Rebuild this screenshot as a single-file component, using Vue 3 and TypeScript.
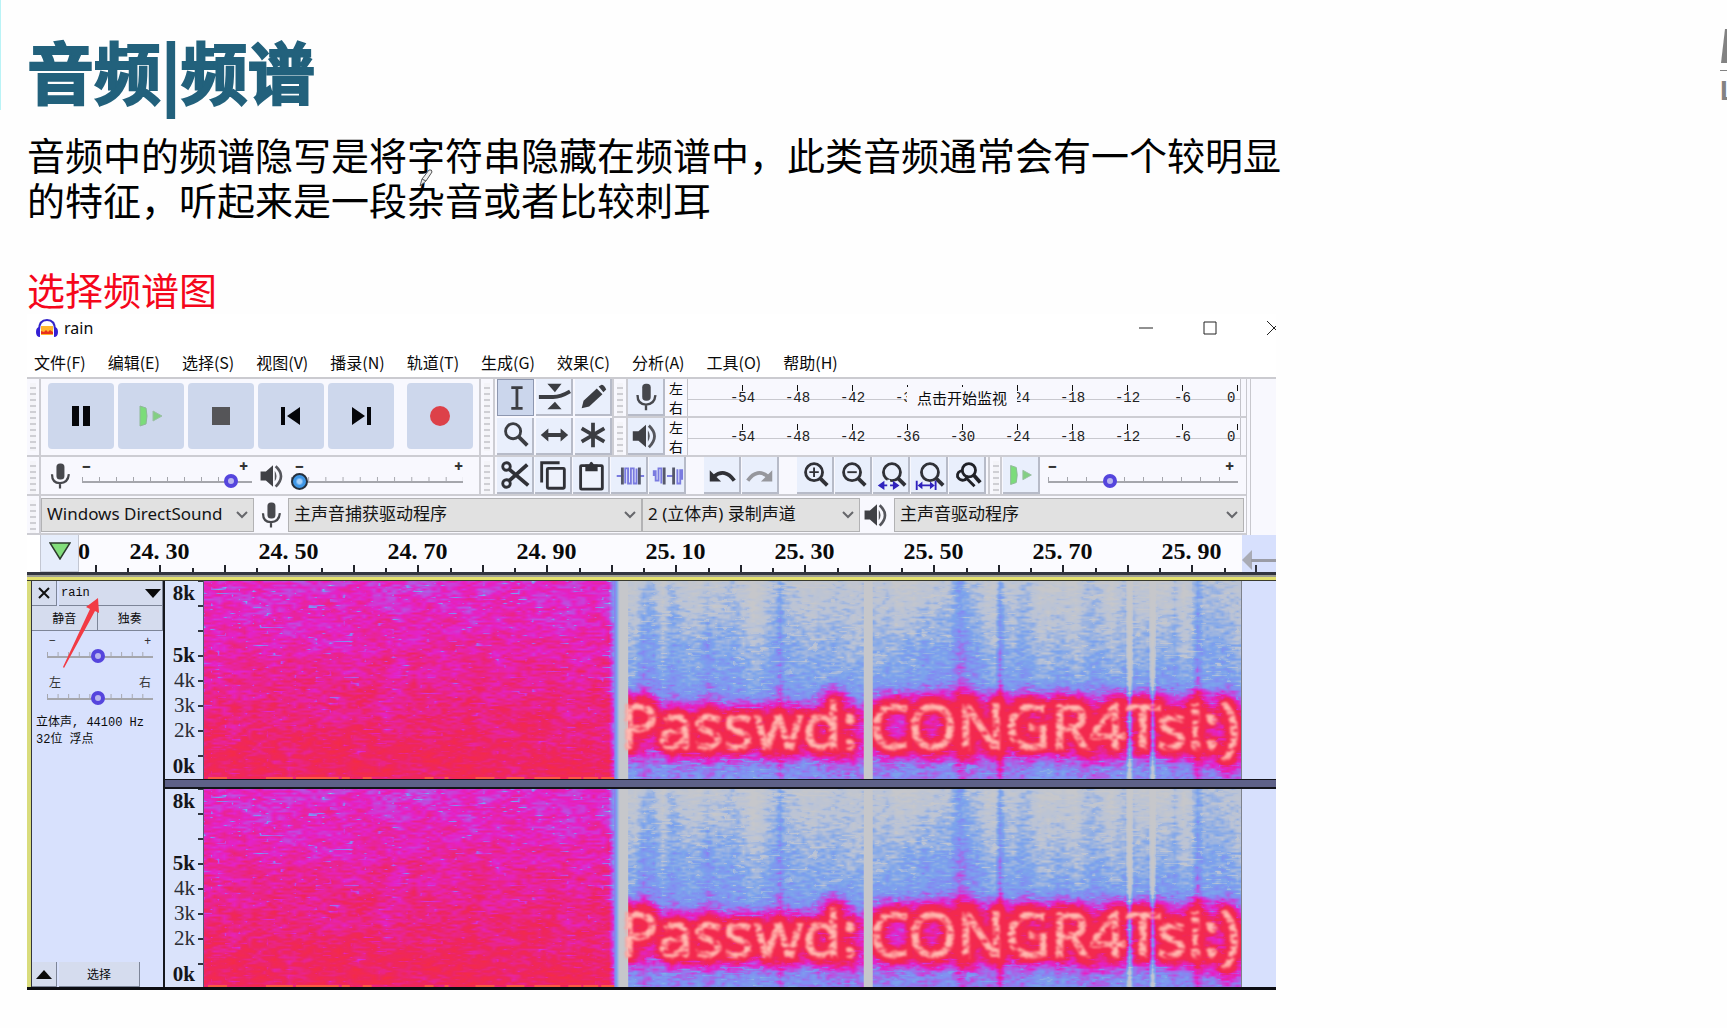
<script setup lang="ts">
import { onMounted, ref } from 'vue'

const menus = ['文件(F)', '编辑(E)', '选择(S)', '视图(V)', '播录(N)', '轨道(T)', '生成(G)', '效果(C)', '分析(A)', '工具(O)', '帮助(H)']
const transport = [
  { icon: 'pause', label: '暂停' },
  { icon: 'play', label: '播放' },
  { icon: 'stop', label: '停止' },
  { icon: 'prev', label: '跳至开头' },
  { icon: 'next', label: '跳至结尾' },
  { icon: 'record', label: '录制' },
]
const tools = [
  { icon: 'ibeam', label: '选择工具' },
  { icon: 'envelope', label: '包络工具' },
  { icon: 'pencil', label: '绘制工具' },
  { icon: 'lens', label: '缩放工具' },
  { icon: 'shift', label: '时间移动工具' },
  { icon: 'multi', label: '多功能工具' },
]
const meters = [
  { icon: 'mic', label: '录制电平', hint: true },
  { icon: 'speaker', label: '播放电平', hint: false },
]
const levels = ['-54', '-48', '-42', '-36', '-30', '-24', '-18', '-12', '-6', '0']
const editGroups = [
  [
    { icon: 'cut', label: '剪切' },
    { icon: 'copy', label: '复制' },
    { icon: 'paste', label: '粘贴' },
    { icon: 'trim', label: '修剪' },
    { icon: 'silence', label: '静音选区' },
  ],
  [
    { icon: 'undo', label: '撤销' },
    { icon: 'redo', label: '重做' },
  ],
  [
    { icon: 'zoomin', label: '放大' },
    { icon: 'zoomout', label: '缩小' },
    { icon: 'fitsel', label: '适应选区' },
    { icon: 'fitproj', label: '适应项目' },
    { icon: 'zoomtoggle', label: '缩放切换' },
  ],
]
const times = ['24. 30', '24. 50', '24. 70', '24. 90', '25. 10', '25. 30', '25. 50', '25. 70', '25. 90']
const freqs = [
  { text: '8k', cls: 'strong' },
  { text: '5k', cls: 'strong far' },
  { text: '4k', cls: '' },
  { text: '3k', cls: '' },
  { text: '2k', cls: '' },
  { text: '0k', cls: 'strong near' },
]

const recVol = ref(91)
const playVol = ref(0)
const speed = ref(31)
const gain = ref(48)
const pan = ref(48)

const W = 1039
const H = 198
const BASELINE = 168
const messages = [
  { text: 'Passwd:', x: 417 },
  { text: 'CONGR4Ts!:)', x: 667 },
]
const canvases = ref<HTMLCanvasElement[]>([])

type Stop = [number, number, number, number]
const ramp: Stop[] = [
  [0, 198, 199, 203],
  [0.16, 186, 195, 214],
  [0.34, 124, 164, 236],
  [0.46, 130, 140, 242],
  [0.58, 184, 84, 226],
  [0.68, 228, 34, 200],
  [0.86, 238, 38, 96],
  [1, 246, 44, 64],
]

function colour(v: number): [number, number, number] {
  const t = Math.max(0, Math.min(1, v))
  for (let i = 1; i < ramp.length; i++) {
    const a = ramp[i - 1]
    const b = ramp[i]
    if (t <= b[0]) {
      const k = (t - a[0]) / (b[0] - a[0])
      return [a[1] + (b[1] - a[1]) * k, a[2] + (b[2] - a[2]) * k, a[3] + (b[3] - a[3]) * k]
    }
  }
  return [246, 44, 64]
}

function hash(x: number, y: number): number {
  let n = Math.imul(x, 374761393) + Math.imul(y, 668265263)
  n = Math.imul(n ^ (n >>> 13), 1274126177)
  return ((n ^ (n >>> 16)) >>> 0) / 4294967295
}

function noise(x: number, y: number, sx: number, sy: number, seed: number): number {
  const fx = x / sx
  const fy = y / sy
  const ix = Math.floor(fx)
  const iy = Math.floor(fy)
  const u = fx - ix
  const v = fy - iy
  const h = (i: number, j: number) => hash(i + seed * 977, j + seed * 131)
  const top = h(ix, iy) * (1 - u) + h(ix + 1, iy) * u
  const low = h(ix, iy + 1) * (1 - u) + h(ix + 1, iy + 1) * u
  return top * (1 - v) + low * v
}

/* Energy around the lettering, read back as a 0-255 alpha plane. */
function glow(line: number, blur: number): Uint8ClampedArray {
  const c = document.createElement('canvas')
  c.width = W
  c.height = H
  const g = c.getContext('2d')!
  g.font = '63px "Noto Sans"'
  g.lineJoin = 'round'
  g.lineWidth = line
  g.filter = `blur(${blur}px)`
  for (const m of messages) g.strokeText(m.text, m.x, BASELINE)
  return g.getImageData(0, 0, W, H).data
}

function near(x: number, at: number, half: number): number {
  return Math.max(0, 1 - Math.abs(x - at) / half)
}

function paint(canvas: HTMLCanvasElement, inner: Uint8ClampedArray, outer: Uint8ClampedArray) {
  const ctx = canvas.getContext('2d')!
  const img = ctx.createImageData(W, H)
  for (let y = 0; y < H; y++) {
    for (let x = 0; x < W; x++) {
      const o = (y * W + x) * 4
      const fine = noise(x, y, 5, 2, 1)
      let v: number
      let rgb: [number, number, number]
      if (x < 411) {
        const n = noise(x, y, 7, 2, 2)
        v = 0.66 + (y / H) * 0.22 + (fine - 0.5) * 0.16 + (noise(x, y, 14, 9, 5) - 0.5) * 0.12
        if (n > 0.84) v -= (n - 0.84) * (2.6 - (y / H) * 1.9)
        if (x > 405) v -= (x - 405) * 0.05
        rgb = colour(v)
        if (y > 195 && noise(x, 0, 9, 1, 8) > 0.5) rgb = [250, 90, 66]
      } else {
        const col = noise(x, 0, 9, 1, 3)
        const wide = noise(x, y, 22, 70, 4)
        const depth = Math.min(1, y / 105)
        v = 0.1 + depth * 0.26 + (col - 0.5) * 0.22 * (1 - depth * 0.6) + (wide - 0.5) * 0.14
        v += (fine - 0.5) * 0.18 + (noise(x, y, 3, 3, 7) - 0.5) * 0.08
        if (noise(x, y, 9, 2, 6) > 0.83) v -= 0.1
        v += near(x, 440, 9) * 0.14 + near(x, 757, 14) * 0.12 + near(x, 797, 5) * 0.2
        v += near(x, 577, 5) * 0.1 + near(x, 995, 6) * 0.16 + near(x, 1026, 9) * 0.12
        if (y > 95) v += Math.min(1, (y - 95) / 35) * 0.1
        v += (outer[o + 3] / 255) * 0.24 + (inner[o + 3] / 255) * 0.32
        v -= near(x, 927, 4) * 0.4 + near(x, 950, 4) * 0.4
        if (x < 416) v = 0.5 - (x - 411) * 0.08
        else if (x < 425 || (x > 660 && x < 670)) v = 0
        rgb = colour(Math.min(v, 0.94))
      }
      img.data[o] = rgb[0]
      img.data[o + 1] = rgb[1]
      img.data[o + 2] = rgb[2]
      img.data[o + 3] = 255
    }
  }
  ctx.putImageData(img, 0, 0)
}

onMounted(() => {
  const inner = glow(11, 3)
  const outer = glow(28, 5)
  canvases.value.forEach((c) => paint(c, inner, outer))
})
</script>

<template>
  <svg class="defs" aria-hidden="true">
    <symbol id="pause" viewBox="0 0 36 36"><path d="M9 8h7v20H9zM20 8h7v20h-7z" fill="#05060a" /></symbol>
    <symbol id="play" viewBox="0 0 36 36"><path d="M7 8l6 2q2 8 0 16l-6 2z" fill="#7bdc7a" stroke="#8fb899" /><path d="M20 13l9 5-9 5z" fill="#83cf83" stroke="#9bbfa5" /></symbol>
    <symbol id="stop" viewBox="0 0 36 36"><path d="M9 9h18v18H9z" fill="#555558" /></symbol>
    <symbol id="prev" viewBox="0 0 36 36"><path d="M8 9h4v18H8zM27 9v18L14 18z" fill="#05060a" /></symbol>
    <symbol id="next" viewBox="0 0 36 36"><path d="M24 9h4v18h-4zM9 9v18l13-9z" fill="#05060a" /></symbol>
    <symbol id="record" viewBox="0 0 36 36"><circle cx="18" cy="18" r="10" fill="#dd4149" /></symbol>
    <symbol id="ibeam" viewBox="0 0 36 36"><path d="M13 7h12M19 7v22M13 29h12" fill="none" stroke="#3b3d42" stroke-width="3" /></symbol>
    <symbol id="envelope" viewBox="0 0 36 36"><path d="M11 4h15l-7 9zM11 31h15l-7-8z" fill="#3b3d42" /><path d="M2 18h15q8 0 18-6" fill="none" stroke="#3b3d42" stroke-width="4" /></symbol>
    <symbol id="pencil" viewBox="0 0 36 36"><path d="M6 30l2-8L22 9l6 6-14 13zM24 7l3-2q3 0 5 5l-3 3z" fill="#3b3d42" /></symbol>
    <symbol id="lens" viewBox="0 0 36 36"><circle cx="16" cy="14" r="8" fill="none" stroke="#3b3d42" stroke-width="3" /><path d="M22 20l9 9" stroke="#3b3d42" stroke-width="4" /></symbol>
    <symbol id="shift" viewBox="0 0 36 36"><path d="M4 18l8-7v5h13v-5l8 7-8 7v-5H12v5z" fill="#3b3d42" /></symbol>
    <symbol id="multi" viewBox="0 0 36 36"><path d="M18 5v26M6 11l24 14M30 11L6 25" stroke="#3b3d42" stroke-width="4" /></symbol>
    <symbol id="mic" viewBox="0 0 36 36"><rect x="14" y="4" width="9" height="18" rx="4" fill="#47484d" /><path d="M9 16q0 10 9 10t10-10M18 26v6" fill="none" stroke="#47484d" stroke-width="2.5" /></symbol>
    <symbol id="speaker" viewBox="0 0 36 36"><path d="M4 13h6l8-7v24l-8-7H4z" fill="#3f4045" /><path d="M20 12q4 6 0 12z" fill="#55565c" /><path d="M21 7q12 11 0 23" fill="none" stroke="#55565c" stroke-width="3" /></symbol>
    <symbol id="cut" viewBox="0 0 36 36"><g fill="none" stroke="#303137" stroke-width="3"><circle cx="9" cy="9" r="4" /><circle cx="9" cy="27" r="4" /><path d="M12 12l20 17M12 24L31 7" stroke-width="4" /></g></symbol>
    <symbol id="copy" viewBox="0 0 36 36"><path d="M6 26V5h19" fill="none" stroke="#303137" stroke-width="3" /><rect x="12" y="11" width="18" height="21" rx="1" fill="#eef2fc" stroke="#303137" stroke-width="3" /></symbol>
    <symbol id="paste" viewBox="0 0 36 36"><rect x="7" y="8" width="23" height="25" rx="1" fill="#eef2fc" stroke="#303137" stroke-width="3" /><path d="M12 7h4q2-6 5 0h4v7H12z" fill="#303137" /></symbol>
    <symbol id="trim" viewBox="0 0 36 36"><path d="M5 19h7M28 19h6" stroke="#7a7be0" stroke-width="2" /><path d="M14 27V11h3v16h3V11h3v16h3V11" fill="none" stroke="#7a7be0" stroke-width="2" /><path d="M11 10v18M29 10v18" stroke="#55586a" stroke-width="3" /></symbol>
    <symbol id="silence" viewBox="0 0 36 36"><path d="M4 19v-5h2v10h3V11h3v16M18 19h8M29 12v15h3V13h2v10" fill="none" stroke="#7a7be0" stroke-width="2" /><path d="M15 10v18M25 10v18" stroke="#55586a" stroke-width="3" /></symbol>
    <symbol id="undo" viewBox="0 0 36 36"><path d="M5 13v12h12z" fill="#303137" /><path d="M9 20q12-10 22 4" fill="none" stroke="#303137" stroke-width="4" /></symbol>
    <symbol id="redo" viewBox="0 0 36 36"><path d="M31 13v12H19z" fill="#96979d" /><path d="M27 20Q15 10 5 24" fill="none" stroke="#96979d" stroke-width="4" /></symbol>
    <symbol id="zoomin" viewBox="0 0 36 36"><g fill="none" stroke="#303137" stroke-width="3"><circle cx="17" cy="15" r="9" /><path d="M23 21l8 8" stroke-width="4" /><path d="M12 15h10M17 10v10" stroke-width="2" /></g></symbol>
    <symbol id="zoomout" viewBox="0 0 36 36"><g fill="none" stroke="#303137" stroke-width="3"><circle cx="17" cy="15" r="9" /><path d="M23 21l8 8" stroke-width="4" /><path d="M12 15h10" stroke-width="2" /></g></symbol>
    <symbol id="fitsel" viewBox="0 0 36 36"><g fill="none" stroke="#303137" stroke-width="3"><circle cx="19" cy="15" r="9" /><path d="M25 21l8 8" stroke-width="4" /></g><path d="M4 29l7-5v4h9v-4l7 5-7 5v-4h-9v4z" fill="#2f22bd" /><path d="M14 23h3v11h-3z" fill="#e9effc" /></symbol>
    <symbol id="fitproj" viewBox="0 0 36 36"><g fill="none" stroke="#303137" stroke-width="3"><circle cx="19" cy="15" r="9" /><path d="M25 21l8 8" stroke-width="4" /></g><path d="M4 24h2v10H4zM24 24h2v10h-2zM6 29l5-4v3h8v-3l5 4-5 4v-3h-8v3z" fill="#2f22bd" /></symbol>
    <symbol id="zoomtoggle" viewBox="0 0 36 36"><g fill="none" stroke="#202127" stroke-width="3"><circle cx="20" cy="13" r="7" /><path d="M25 18l7 8" stroke-width="4" /><path d="M14 13q-7 1-6 7 3 5 8 3l3-4M18 22l8 8" /></g></symbol>
    <symbol id="chevron" viewBox="0 0 12 8"><path d="M1 1l5 5 5-5" fill="none" stroke="#66676b" stroke-width="2" /></symbol>
  </svg>

  <main class="slide">
    <div class="brand" aria-hidden="true">
      <svg viewBox="0 0 14 43" width="14" height="43"><path d="M5 0h9v34H1z" fill="#828282" /><path d="M0 41h14v1H0z" fill="#828282" /></svg>
      <b>L</b>
    </div>
    <h1>音频|频谱</h1>
    <div class="copy">
      <p>音频中的频谱隐写是将字符串隐藏在频谱中，此类音频通常会有一个较明显<br />的特征，听起来是一段杂音或者比较刺耳</p>
      <p class="red">选择频谱图</p>
      <svg class="pen" viewBox="0 0 16 20" width="16" height="20"><path d="M2 18l2-7 7-9q3-1 3 2l-6 9zM4 11l4 2" fill="#eee" stroke="#555" /></svg>
    </div>

    <section class="app">
      <header class="titlebar">
        <svg class="logo" viewBox="0 0 24 20" width="24" height="20">
          <path d="M6 8h12v9H6z" fill="#ffb52e" /><path d="M6 13l3 1 2-2 2 2 2-2 3 2v2H6z" fill="#e8301c" />
          <path d="M4 12Q4 2 12 2t8 10" fill="none" stroke="#3325c8" stroke-width="2" />
          <path d="M5 9Q1 9 1 14t4 5zM19 9q4 0 4 5t-4 5z" fill="#3420d4" />
        </svg>
        <span class="wintitle">rain</span>
        <div class="wincontrols">
          <button aria-label="最小化"><svg viewBox="0 0 14 14" width="14" height="14"><path d="M0 7h14" stroke="#222" /></svg></button>
          <button aria-label="最大化"><svg viewBox="0 0 14 14" width="14" height="14"><path d="M1 1h12v12H1z" fill="none" stroke="#222" /></svg></button>
          <button aria-label="关闭"><svg viewBox="0 0 14 14" width="14" height="14"><path d="M0 0l14 14M14 0L0 14" stroke="#222" /></svg></button>
        </div>
      </header>
      <nav class="menus"><button v-for="m in menus" :key="m">{{ m }}</button></nav>

      <div class="bars">
        <div class="barsmain">
          <div class="row tall">
            <i class="grip"></i>
            <div class="left transport">
              <button v-for="t in transport" :key="t.icon" :class="t.icon" :aria-label="t.label"><svg><use :href="'#' + t.icon" /></svg></button>
            </div>
            <i class="grip"></i>
            <div class="tools">
              <button v-for="(t, i) in tools" :key="t.icon" class="tool" :class="{ on: i === 0 }" :aria-label="t.label"><svg><use :href="'#' + t.icon" /></svg></button>
            </div>
            <div class="meters">
              <div v-for="m in meters" :key="m.icon" class="meterrow">
                <i class="grip"></i>
                <button class="tool" :aria-label="m.label"><svg><use :href="'#' + m.icon" /></svg></button>
                <span class="lr"><span>左</span><span>右</span></span>
                <div class="meter">
                  <span v-for="l in levels" :key="l">{{ l }}</span>
                  <button v-if="m.hint" class="hint">点击开始监视</button>
                </div>
              </div>
            </div>
          </div>

          <div class="row">
            <i class="grip"></i>
            <div class="left mixer">
              <svg class="ico"><use href="#mic" /></svg>
              <label class="slider"><span class="ends"><b>−</b><b>+</b></span><input v-model="recVol" type="range" aria-label="录制音量" /></label>
              <svg class="ico"><use href="#speaker" /></svg>
              <label class="slider blue"><span class="ends"><b>−</b><b>+</b></span><input v-model="playVol" type="range" aria-label="播放音量" /></label>
            </div>
            <i class="grip"></i>
            <div class="edits">
              <div v-for="(g, i) in editGroups" :key="i" class="group">
                <button v-for="t in g" :key="t.icon" class="tool" :aria-label="t.label"><svg><use :href="'#' + t.icon" /></svg></button>
              </div>
            </div>
            <i class="grip lead"></i>
            <button class="tool" aria-label="按速度播放"><svg><use href="#play" /></svg></button>
            <label class="slider speed"><span class="ends"><b>−</b><b>+</b></span><input v-model="speed" type="range" aria-label="播放速度" /></label>
          </div>

          <div class="row devices">
            <i class="grip"></i>
            <div class="pick host"><select aria-label="音频主机"><option>Windows DirectSound</option></select><svg><use href="#chevron" /></svg></div>
            <svg class="ico"><use href="#mic" /></svg>
            <div class="pick input"><select aria-label="录制设备"><option>主声音捕获驱动程序</option></select><svg><use href="#chevron" /></svg></div>
            <div class="pick channels"><select aria-label="录制声道"><option>2 (立体声) 录制声道</option></select><svg><use href="#chevron" /></svg></div>
            <svg class="ico"><use href="#speaker" /></svg>
            <div class="pick output"><select aria-label="播放设备"><option>主声音驱动程序</option></select><svg><use href="#chevron" /></svg></div>
          </div>
        </div>
        <div class="barsend"></div>
      </div>

      <div class="timeline">
        <button class="pin" aria-label="固定播放头"><svg viewBox="0 0 22 18" width="22" height="18"><path d="M1 1h20L11 17z" fill="#82dd7b" stroke="#2c3a2c" stroke-width="1.5" /></svg></button>
        <div class="ticks"><span class="first">0</span><span v-for="t in times" :key="t">{{ t }}</span></div>
        <div class="after"><svg viewBox="0 0 34 24" width="34" height="24"><path d="M0 12L10 2v20z" fill="#a9abb5" /><path d="M9 11h25v3H9z" fill="#9a9ca6" /><path d="M14 17v7" stroke="#33353f" stroke-width="2" /></svg></div>
      </div>

      <div class="track">
        <aside class="panel">
          <div class="head">
            <button class="close" aria-label="关闭轨道"><svg viewBox="0 0 12 12" width="12" height="12"><path d="M1 1l10 10M11 1L1 11" stroke="#111" stroke-width="2" /></svg></button>
            <button class="name">rain<svg viewBox="0 0 16 9" width="16" height="9"><path d="M0 0h16L8 9z" fill="#0a0a0a" /></svg></button>
          </div>
          <div class="mute"><button>静音</button><button>独奏</button></div>
          <label class="slider small"><span class="ends"><b>−</b><b>+</b></span><input v-model="gain" type="range" aria-label="增益" /></label>
          <label class="slider small"><span class="ends"><b>左</b><b>右</b></span><input v-model="pan" type="range" aria-label="声像" /></label>
          <p class="info">立体声, 44100 Hz<br />32位 浮点</p>
          <div class="foot">
            <button aria-label="折叠"><svg viewBox="0 0 16 9" width="16" height="9"><path d="M0 9h16L8 0z" fill="#0a0a0a" /></svg></button>
            <button class="wide">选择</button>
          </div>
          <svg class="arrow" viewBox="0 0 40 72" width="40" height="72"><path d="M38 0l1 15-4-2L4 70l-1-1L30 11l-4-2z" fill="#f23b44" /></svg>
        </aside>
        <div class="lanes">
          <div v-for="n in 2" :key="n" class="lane">
            <div class="freq"><span v-for="f in freqs" :key="f.text" :class="f.cls">{{ f.text }}</span></div>
            <div class="spectro">
              <canvas ref="canvases" :width="W" :height="H"></canvas>
              <svg :viewBox="`0 0 ${W} ${H}`">
                <filter :id="'rough' + n" x="-5%" y="-20%" width="110%" height="140%">
                  <feTurbulence type="fractalNoise" baseFrequency="0.1 0.24" numOctaves="2" seed="4" result="t" />
                  <feDisplacementMap in="SourceGraphic" in2="t" scale="5" result="d" />
                  <feColorMatrix in="t" type="matrix" values="0 0 0 0 0  0 0 0 0 0  0 0 0 0 0  0 0 0 4 -1.1" result="m" />
                  <feComposite in="d" in2="m" operator="in" />
                  <feGaussianBlur stdDeviation="0.8" />
                </filter>
                <g :filter="`url(#rough${n})`"><text v-for="m in messages" :key="m.text" :x="m.x" :y="BASELINE">{{ m.text }}</text></g>
              </svg>
            </div>
            <div class="empty"></div>
          </div>
        </div>
      </div>
    </section>
  </main>
</template>

<style>
body { margin: 0; background: #fefefe; }
</style>

<style scoped>
* { box-sizing: border-box; }
button { border: 0; padding: 0; margin: 0; background: none; font: inherit; color: inherit; }
svg { display: block; flex: none; }
.defs { position: absolute; width: 0; height: 0; }
.slide {
  position: relative;
  overflow: hidden;
  padding: 24px 27px 38px;
  font-family: "Noto Sans", "Noto Sans CJK SC", sans-serif;
  color: #0a0a0a;
}
.slide::before { content: ""; position: absolute; left: 0; top: 0; width: 1px; height: 110px; background: #b9f3f6; }
.brand { position: absolute; right: -7px; top: 29px; width: 14px; color: #828282; }
.brand b { display: block; margin-top: 3px; font: bold 28px/32px "Liberation Sans", sans-serif; }
h1 {
  margin: 0;
  font: bold 67px/92px "Noto Sans CJK SC", sans-serif;
  color: #22617c;
  -webkit-text-stroke: 2px #22617c;
}
.copy { position: relative; margin-top: 15px; padding-bottom: 3px; font: 38px/45px "Noto Sans CJK SC", sans-serif; color: #000; white-space: nowrap; }
.copy p { margin: 0; }
.copy .red { margin-top: 45px; color: #f5061b; }
.pen { position: absolute; left: 391px; top: 37px; }

.app { max-width: 1249px; overflow: hidden; background: #fff; }
.titlebar { display: flex; align-items: center; height: 28px; padding-left: 8px; }
.wintitle { margin-left: 5px; font-size: 16px; line-height: 24px; }
.wincontrols { display: flex; margin: 0 -30px 0 auto; }
.wincontrols button { display: flex; justify-content: center; width: 64px; }
.menus { display: flex; gap: 22px; height: 35px; padding-left: 7px; font: 16px/40px "Noto Sans CJK SC", sans-serif; }
.menus button { white-space: nowrap; }

.bars { display: flex; border-top: 2px solid #cbcbd0; background: #f8f8fe; }
.barsmain { flex: 1; min-width: 0; border-right: 1px solid #c8c8ce; }
.barsend { width: 29px; margin-left: 3px; margin-right: -3px; border-left: 1px solid #c8c8ce; }
.row { display: flex; height: 39px; border-bottom: 2px solid #cdcdd3; }
.tall { height: 78px; }
.grip {
  flex: none;
  width: 14px;
  border-right: 2px solid #cdcdd3;
  background: repeating-linear-gradient(#f4f4f8 0 4px, #cfcfd4 4px 6px) 3px 4px / 6px 90% no-repeat;
}
.left { flex: none; width: 440px; border-right: 2px solid #cdcdd3; }
.transport { display: flex; gap: 4px; padding: 4px 0 0 7px; }
.transport button { display: flex; align-items: center; justify-content: center; width: 66px; height: 66px; border-radius: 4px; background: #cdd7ec; }
.transport .record { margin-left: 9px; }
.transport svg { width: 36px; height: 36px; }
.tool { display: flex; flex: none; align-items: center; justify-content: center; width: 37px; height: 37px; border-right: 2px solid #b7bbc8; border-bottom: 2px solid #b7bbc8; background: #e9effc; }
.tool svg { width: 34px; height: 34px; }
.tool.on { border: 1px solid #8d97b0; background: #cbd6ec; }
.tools { display: grid; grid-template-columns: repeat(3, 37px); gap: 1px 2px; padding-left: 2px; width: 119px; border-right: 2px solid #cdcdd3; }
.meters { flex: 1; min-width: 0; }
.meterrow { display: flex; height: 39px; border-bottom: 2px solid #cdcdd3; }
.lr { display: flex; flex-direction: column; width: 22px; padding-left: 4px; font: 14px/19px "Noto Sans CJK SC", sans-serif; }
.meter {
  position: relative;
  display: flex;
  flex: 1;
  margin-right: 5px;
  padding-left: 27px;
  border-left: 1px solid #c3c3c9;
  border-right: 1px solid #c3c3c9;
  background: linear-gradient(#c9c9cf, #c9c9cf) 0 20px / 100% 1px no-repeat;
  font: 14px/38px "Liberation Mono", monospace;
}
.meter span { position: relative; flex: 0 0 55px; text-align: center; color: #222; }
.meter span::before { content: ""; position: absolute; left: 27px; top: 6px; width: 1px; height: 6px; background: #111; }
.meter span:last-of-type { flex: 0 0 28px; padding-left: 17px; text-align: left; }
.hint { position: absolute; left: 219px; top: 8px; width: 110px; height: 22px; background: #f8f8fe; font: 15px/20px "Noto Sans CJK SC", sans-serif; white-space: nowrap; }

.mixer { display: flex; align-items: center; padding-left: 2px; }
.ico { width: 34px; height: 32px; }
.slider { display: flex; flex-direction: column; width: 170px; padding-top: 3px; height: 37px; }
.mixer .slider { margin-left: 5px; }
.mixer .slider + .ico { margin-left: 4px; }
.mixer .blue { width: 172px; }
.ends { display: flex; justify-content: space-between; padding: 0 4px 0 0; font: bold 15px/12px "Noto Sans", "Noto Sans CJK SC", sans-serif; color: #333; }
.slider input {
  appearance: none;
  width: 100%;
  height: 18px;
  margin: 0;
  background:
    linear-gradient(#a5a6ac, #a5a6ac) 0 9px / 100% 2px no-repeat,
    linear-gradient(90deg, #a5a6ac 1px, transparent 1px) 0 5px / 10% 5px repeat-x;
}
.slider input::-webkit-slider-thumb { appearance: none; width: 14px; height: 14px; border: 4px solid #5545dd; border-radius: 50%; background: #b9b6ee; }
.blue input::-webkit-slider-thumb { width: 17px; height: 17px; border: 2px solid #26303c; background: radial-gradient(#a8d2fa 2px, #3f97e6 4px); }
.blue input { margin-left: -4px; }
.speed { width: 190px; margin-left: 8px; }
.edits { display: flex; gap: 18px; padding-left: 2px; width: 493px; }
.group { display: flex; gap: 1px; }
.lead { border-left: 2px solid #cdcdd3; margin-right: 1px; }

.devices { align-items: center; }
.devices .grip { align-self: stretch; }
.pick { position: relative; flex: none; height: 34px; }
.pick select { appearance: none; width: 100%; height: 100%; padding: 0 24px 2px 5px; border: 1px solid #b2b2b4; border-radius: 0; background: #e1e1e1; font: 17px "Noto Sans", "Noto Sans CJK SC", sans-serif; color: #141414; }
.pick svg { position: absolute; right: 6px; top: 13px; width: 12px; height: 8px; pointer-events: none; }
.host { width: 213px; }
.input { width: 354px; }
.channels { width: 218px; }
.output { flex: 1; margin-right: 2px; }

.timeline { display: flex; height: 37px; background: #fbfbff; border-left: 13px solid #fff; }
.pin { display: flex; align-items: center; justify-content: center; width: 39px; padding-bottom: 4px; border: 1px solid #c3c7d2; border-top: 0; background: #e6edfb; }
.ticks { display: flex; flex: 1; min-width: 0; overflow: hidden; font: bold 24px/33px "Liberation Serif", serif; }
.ticks span {
  flex: 0 0 129px;
  text-align: center;
  background:
    linear-gradient(#22242c, #22242c) 0 100% / 2px 7px no-repeat,
    linear-gradient(#22242c, #22242c) 64px 100% / 2px 7px no-repeat,
    linear-gradient(#22242c, #22242c) 32px 100% / 2px 4px no-repeat,
    linear-gradient(#22242c, #22242c) 97px 100% / 2px 4px no-repeat;
}
.ticks .first { flex: 0 0 16px; background: none; text-align: left; text-indent: -1px; }
.after { display: flex; align-items: flex-end; width: 34px; background: #d7e0fd; }

.track { display: flex; border-top: 3px solid #32343f; border-bottom: 3px solid #0c0d12; background: linear-gradient(#9c9d95 2px, #e3e06e 2px 5px, #3a3b30 5px); padding-top: 6px; }
.panel { position: relative; display: flex; flex-direction: column; width: 138px; border-left: 4px solid #d9dc7c; border-right: 2px solid #16181e; background: #d8e1fd; box-shadow: inset 1px 0 #33353f; font: 12px "Liberation Mono", "Noto Sans CJK SC", monospace; }
.panel button { border-right: 1px solid #7d8598; border-bottom: 1px solid #7d8598; background: #d5dcee; }
.head { display: flex; gap: 2px; height: 25px; padding-left: 1px; }
.head .close { display: flex; align-items: center; justify-content: center; width: 25px; }
.name { display: flex; flex: 1; align-items: center; justify-content: space-between; padding: 0 1px 0 2px; }
.mute { display: flex; height: 25px; padding-left: 1px; }
.mute button { flex: 1; }
.panel .small { width: 106px; height: 42px; margin-left: 16px; padding-top: 4px; }
.small .ends { padding: 0 2px; font-size: 12px; line-height: 12px; }
.info { margin: 0; padding: 0 0 0 5px; line-height: 17px; white-space: nowrap; }
.small .ends b { font-weight: normal; }
.foot { display: flex; gap: 2px; height: 25px; margin-top: auto; padding-left: 1px; }
.foot button { display: flex; align-items: center; justify-content: center; width: 25px; }
.foot .wide { width: 81px; }
.arrow { position: absolute; left: 29px; top: 17px; }

.lanes {
  flex: 1;
  min-width: 0;
  background: linear-gradient(#14151c 1px, #5e6188 1px 8px, #14151c 8px 10px) 0 198px / 100% 10px no-repeat;
}
.lane { display: flex; height: 198px; }
.lane + .lane { margin-top: 10px; }
.freq {
  display: flex;
  flex: none;
  flex-direction: column;
  width: 38px;
  padding-right: 8px;
  text-align: right;
  font: 21px/25px "Liberation Serif", serif;
  color: #2b2d34;
  background: linear-gradient(transparent 23px, #33353f 23px) 100% 1px / 5px 25px repeat-y, #dae3fb;
}
.freq .strong { font-weight: bold; color: #15161a; }
.freq .far { margin-top: 37px; }
.freq .near { margin-top: 11px; }
.spectro { position: relative; flex: 1; min-width: 0; background: #c6c7cb; border-left: 1px solid #555a78; border-right: 1px solid #7e828c; }
.spectro canvas { display: block; width: 100%; height: 198px; }
.spectro svg { position: absolute; left: 0; top: 0; width: 100%; height: 198px; overflow: hidden; }
.spectro text { font: 63px "Noto Sans", sans-serif; fill: #ffbdb4; stroke: #ff9d98; stroke-width: 2px; }
.empty { width: 34px; background: #d7e0fd; }
</style>
